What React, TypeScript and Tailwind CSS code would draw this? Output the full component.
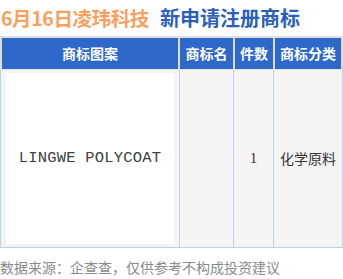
import React from "react";

export default function App() {
  const cjk = { fontFamily: '"Noto Sans CJK SC", "Noto Sans", sans-serif' };
  return (
    <div className="w-[343px] h-[279px] bg-white overflow-hidden" style={cjk}>
      <div className="h-[36px] flex items-center pl-[1px] font-bold leading-none whitespace-nowrap">
        <span className="text-[#f9a05e] text-[19.5px] tracking-[-0.4px]">6月16日凌玮科技</span>
        <span className="text-[#2c5fba] text-[20px] ml-[11px]">新申请注册商标</span>
      </div>
      <div className="bg-[#dedede] pt-[2px] px-[2px] w-[343px]">
        <div className="flex h-[31px] gap-[2px] text-white text-[14px] font-bold">
          <div className="w-[176px] bg-[#2e68c9] flex items-center justify-center">商标图案</div>
          <div className="w-[53px] bg-[#2e68c9] flex items-center justify-center">商标名</div>
          <div className="w-[38px] bg-[#2e68c9] flex items-center justify-center">件数</div>
          <div className="flex-1 bg-[#2e68c9] flex items-center justify-center">商标分类</div>
        </div>
      </div>
      <div className="flex h-[179px] bg-[#f4f4f4] border-l border-r border-b border-[#b9d3ec] border-t border-t-[#e4e8ee] text-[#333] text-[14px]">
        <div className="w-[179px] border-r border-[#b9d3ec] px-[5px] pt-[3px] pb-[3px]">
          <div className="bg-white h-full flex items-center justify-center">
            <span
              className="text-[15.5px] text-[#404040] tracking-[0.2px]"
              style={{ fontFamily: '"Liberation Mono", monospace' }}
            >
              LINGWE POLYCOAT
            </span>
          </div>
        </div>
        <div className="w-[54px] border-r border-[#b9d3ec]"></div>
        <div className="w-[40px] border-r border-[#b9d3ec] flex items-center justify-center">
          <span style={{ fontFamily: '"Liberation Serif", serif' }} className="text-[15px]">1</span>
        </div>
        <div className="flex-1 flex items-center justify-center">化学原料</div>
      </div>
      <div className="mt-[9px] text-[14px] text-[#8a8a8a] leading-[20px] whitespace-nowrap">
        数据来源：企查查，仅供参考不构成投资建议
      </div>
    </div>
  );
}
